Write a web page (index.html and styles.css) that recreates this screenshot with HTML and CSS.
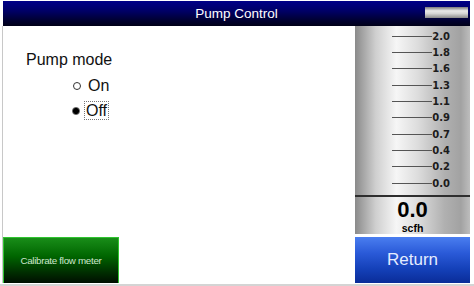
FILE: index.html
```html
<!DOCTYPE html>
<html lang="en">
<head>
  <meta charset="UTF-8">
  <meta name="viewport" content="width=device-width, initial-scale=1.0">
  <title>Pump Control</title>
  <link rel="stylesheet" href="styles.css">
</head>
<body>
  <div class="screen">
    <div class="titlebar">
      <span class="title">Pump Control</span>
      <span class="min-button"></span>
    </div>

    <div class="content">
      <div class="left">
        <div class="mode">
          <div class="mode-label">Pump mode</div>
          <div class="options">
            <div class="option">
              <span class="radio"></span>
              <span class="option-text">On</span>
            </div>
            <div class="option">
              <span class="radio checked"></span>
              <span class="option-text focused">Off</span>
            </div>
          </div>
        </div>
        <button class="calibrate-button">Calibrate flow meter</button>
      </div>

      <div class="right">
        <!-- Flow meter scale -->
        <div class="gauge">
          <div class="tick"><span class="tick-line"></span><span class="tick-label">2.0</span></div>
          <div class="tick"><span class="tick-line"></span><span class="tick-label">1.8</span></div>
          <div class="tick"><span class="tick-line"></span><span class="tick-label">1.6</span></div>
          <div class="tick"><span class="tick-line"></span><span class="tick-label">1.3</span></div>
          <div class="tick"><span class="tick-line"></span><span class="tick-label">1.1</span></div>
          <div class="tick"><span class="tick-line"></span><span class="tick-label">0.9</span></div>
          <div class="tick"><span class="tick-line"></span><span class="tick-label">0.7</span></div>
          <div class="tick"><span class="tick-line"></span><span class="tick-label">0.4</span></div>
          <div class="tick"><span class="tick-line"></span><span class="tick-label">0.2</span></div>
          <div class="tick"><span class="tick-line"></span><span class="tick-label">0.0</span></div>
        </div>
        <div class="readout">
          <div class="readout-value">0.0</div>
          <div class="readout-unit">scfh</div>
        </div>
        <button class="return-button">Return</button>
      </div>
    </div>
  </div>
</body>
</html>
```

FILE: styles.css
```css
body {
  font-family: 'Liberation Sans', Arial, sans-serif;
  margin: 0;
  padding: 0;
  background-color: #fff;
}

.screen {
  width: 474px;
  height: 286px;
  box-sizing: border-box;
  padding: 1px 4px 0 2px;
  border-bottom: 2px solid #d4d4d4;
}

.titlebar {
  position: relative;
  height: 25px;
  margin-left: 1px;
  background: linear-gradient(#000088, #000066 40%, #000034 75%, #000018);
  display: flex;
  align-items: center;
  justify-content: center;
}

.title {
  color: #fff;
  font-size: 13.5px;
  padding-bottom: 1px;
}

.min-button {
  position: absolute;
  top: 6px;
  right: 2px;
  width: 43px;
  height: 11px;
  background: linear-gradient(#7a7a7a, #e8e8e8 35%, #d4d4d4 60%, #8a8a8a);
}

.content {
  display: flex;
  height: 257px;
}

.left {
  flex: 1;
  border-left: 1px solid #c8c8c8;
  display: flex;
  flex-direction: column;
  justify-content: space-between;
}

.mode {
  padding: 24px 0 0 23px;
}

.mode-label {
  font-size: 16px;
  line-height: 20px;
  color: #111;
}

.options {
  margin: 3px 0 0 47px;
}

.option {
  display: flex;
  align-items: center;
  height: 25px;
  font-size: 16px;
  color: #111;
}

.radio {
  width: 6px;
  height: 6px;
  border: 1px solid #333;
  border-radius: 50%;
  background-color: #fff;
  margin-right: 6px;
}

.radio.checked {
  width: 8px;
  height: 8px;
  margin-left: -1px;
  margin-right: 5px;
  border: none;
  background: radial-gradient(circle, #000 0, #000 45%, #666 62%, #d8d8d8 85%, #fff 100%);
}

.option-text {
  line-height: 17px;
  padding: 0 1px;
}

.focused {
  outline: 1px dotted #777;
}

.calibrate-button {
  width: 116px;
  height: 46px;
  padding: 0;
  border: 1px solid #2fc42f;
  border-bottom: none;
  background: linear-gradient(#198d19, #006600 40%, #003000 75%, #000e00);
  color: #cfe6cf;
  font-family: 'Liberation Sans', Arial, sans-serif;
  font-size: 9.8px;
  letter-spacing: -0.3px;
}

.right {
  width: 115px;
  display: flex;
  flex-direction: column;
}

.gauge {
  height: 169px;
  box-sizing: border-box;
  padding-top: 2px;
  background: linear-gradient(to right, #8a8a8a 0%, #cfcfcf 18%, #f6f6f6 36%, #dcdcdc 55%, #b0b0b0 78%, #a2a2a2 92%, #bdbdbd 100%);
}

.tick {
  height: 16.33px;
  display: flex;
  align-items: center;
  justify-content: flex-end;
  padding-right: 20px;
}

.tick-line {
  width: 40px;
  height: 1px;
  background-color: #555;
}

.tick-label {
  font-family: 'DejaVu Sans', Verdana, sans-serif;
  font-weight: bold;
  font-size: 10px;
  color: #1c1c1c;
}

.readout {
  height: 39px;
  box-sizing: border-box;
  border-top: 2px solid #2e2e2e;
  background: linear-gradient(to right, #8a8a8a 0%, #cfcfcf 18%, #f6f6f6 36%, #dcdcdc 55%, #b0b0b0 78%, #a2a2a2 92%, #bdbdbd 100%);
  text-align: center;
  color: #000;
}

.readout-value {
  font-weight: bold;
  font-size: 22px;
  line-height: 20px;
  margin-top: 3px;
}

.readout-unit {
  font-weight: bold;
  font-size: 10.5px;
  line-height: 11px;
  margin-top: 3px;
}

.return-button {
  margin-top: 3px;
  height: 46px;
  padding: 0;
  border: none;
  background: linear-gradient(#4a7ef0, #2a5ad8 35%, #1440b8 70%, #0a2c98);
  color: #e4ecff;
  font-family: 'Liberation Sans', Arial, sans-serif;
  font-size: 17px;
}
```
